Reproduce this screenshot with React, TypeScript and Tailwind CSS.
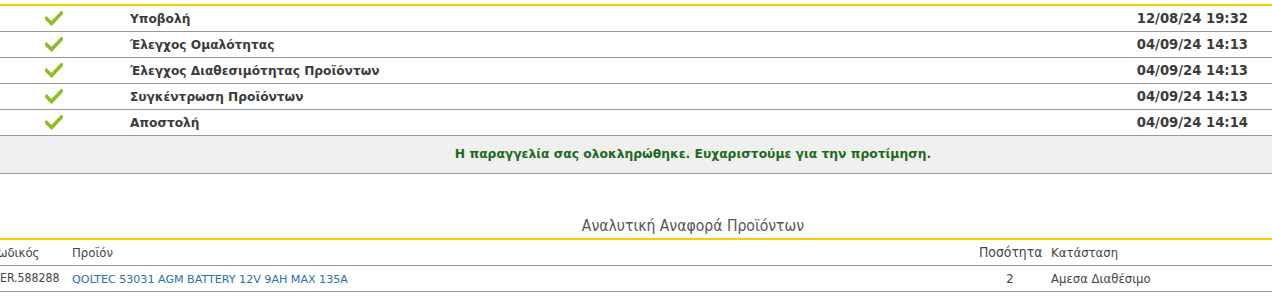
import React from 'react';

const steps = [
  { title: 'Υποβολή', date: '12/08/24 19:32' },
  { title: 'Έλεγχος Ομαλότητας', date: '04/09/24 14:13' },
  { title: 'Έλεγχος Διαθεσιμότητας Προϊόντων', date: '04/09/24 14:13' },
  { title: 'Συγκέντρωση Προϊόντων', date: '04/09/24 14:13' },
  { title: 'Αποστολή', date: '04/09/24 14:14' },
];

const Check = () => (
  <svg width="18" height="15" viewBox="0 0 18 15" className="block">
    <path d="M1.5 7.5 L6.5 12.5 L16.5 2" fill="none" stroke="#8cbf26" strokeWidth="3.6" strokeLinecap="square" />
  </svg>
);

const App: React.FC = () => {
  return (
    <div className="w-[1272px] h-[302px] overflow-hidden bg-white font-['Tahoma','DejaVu_Sans',sans-serif]">
      <div className="w-[1386px] pt-[4px]">
        {/* order history */}
        <div className="border-t-2 border-[#ffcc00]">
          {steps.map(s => (
            <div key={s.title} className="flex items-center h-[26px] border-b border-[#999999] font-bold text-[#3b3b3b]">
              <div className="w-[130px] pl-[45px] shrink-0"><Check /></div>
              <div className="flex-1 pt-[1px] text-[12.2px]">{s.title}</div>
              <div className="pt-[1px] text-right text-[13.2px]">{s.date}</div>
              <div className="w-[138px] shrink-0" />
            </div>
          ))}
        </div>
        <div className="h-[38px] bg-[#f0f0f0] border-b border-[#999999] flex items-center justify-center text-[12.3px] font-bold text-[#1b6b1b]">
          Η παραγγελία σας ολοκληρώθηκε. Ευχαριστούμε για την προτίμηση.
        </div>

        {/* products report */}
        <div className="h-[64px] flex items-end justify-center text-[15.6px] text-[#555555] font-['DejaVu_Sans_Condensed',sans-serif]">
          Αναλυτική Αναφορά Προϊόντων
        </div>
        <div className="border-t-2 border-[#ffcc00] font-['DejaVu_Sans_Condensed',sans-serif] text-[13px] text-[#444444]">
          <div className="flex items-center h-[26px] border-b border-[#999999]">
            <div className="w-[72px] -ml-[10px] shrink-0">Κωδικός</div>
            <div className="w-[907px] shrink-0 ml-[10px]">Προϊόν</div>
            <div className="w-[72px] shrink-0 text-[13.8px]">Ποσότητα</div>
            <div>Κατάσταση</div>
          </div>
          <div className="flex items-center h-[26px] border-b border-[#999999]">
            <div className="w-[72px] shrink-0 text-[12.2px]">ER.588288</div>
            <div className="w-[907px] shrink-0 pt-[3px] text-[11.1px] text-[#2a6fb0] font-['Tahoma','DejaVu_Sans',sans-serif]">QOLTEC 53031 AGM BATTERY 12V 9AH MAX 135A</div>
            <div className="w-[62px] shrink-0 text-center">2</div>
            <div className="ml-[10px]">Αμεσα Διαθέσιμο</div>
          </div>
        </div>
      </div>
    </div>
  );
};

export default App;
